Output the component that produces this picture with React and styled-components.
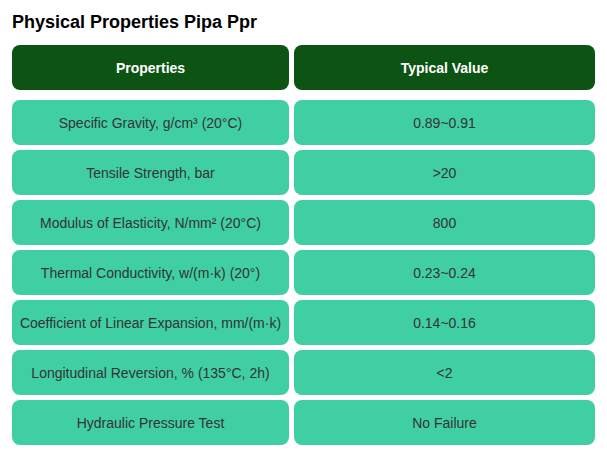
import React from 'react';
import styled, { createGlobalStyle } from 'styled-components';

const rows = [
  ['Specific Gravity, g/cm³ (20°C)', '0.89~0.91'],
  ['Tensile Strength, bar', '>20'],
  ['Modulus of Elasticity, N/mm² (20°C)', '800'],
  ['Thermal Conductivity, w/(m·k) (20°)', '0.23~0.24'],
  ['Coefficient of Linear Expansion, mm/(m·k)', '0.14~0.16'],
  ['Longitudinal Reversion, % (135°C, 2h)', '<2'],
  ['Hydraulic Pressure Test', 'No Failure'],
];

const App = () => (
  <>
    <GlobalStyle />
    <Page>
      <Title>Physical Properties Pipa Ppr</Title>
      <Grid>
        <HeadCell>Properties</HeadCell>
        <HeadCell>Typical Value</HeadCell>
        {rows.map(([name, value]) => (
          <React.Fragment key={name}>
            <Cell>{name}</Cell>
            <Cell>{value}</Cell>
          </React.Fragment>
        ))}
      </Grid>
    </Page>
  </>
);

const GlobalStyle = createGlobalStyle`
  body {
    margin: 0;
    background: #ffffff;
    font-family: "Liberation Sans", Arial, sans-serif;
  }
`;

const Page = styled.div`
  padding: 0 12px;
`;

const Title = styled.h2`
  margin: 0;
  padding-top: 11px;
  height: 45px;
  box-sizing: border-box;
  font-size: 18px;
  font-weight: 700;
  color: #000;
  line-height: 22px;
`;

const Grid = styled.div`
  display: grid;
  grid-template-columns: 277px 301px;
  column-gap: 5px;
  row-gap: 5px;
`;

const BaseCell = styled.div`
  height: 45px;
  border-radius: 8px;
  display: flex;
  align-items: center;
  justify-content: center;
  text-align: center;
  font-size: 14px;
`;

const HeadCell = styled(BaseCell)`
  background: #0d5314;
  color: #ffffff;
  font-weight: 700;
  margin-bottom: 5px;
`;

const Cell = styled(BaseCell)`
  background: #40cfa2;
  color: #333333;
`;

export default App;
